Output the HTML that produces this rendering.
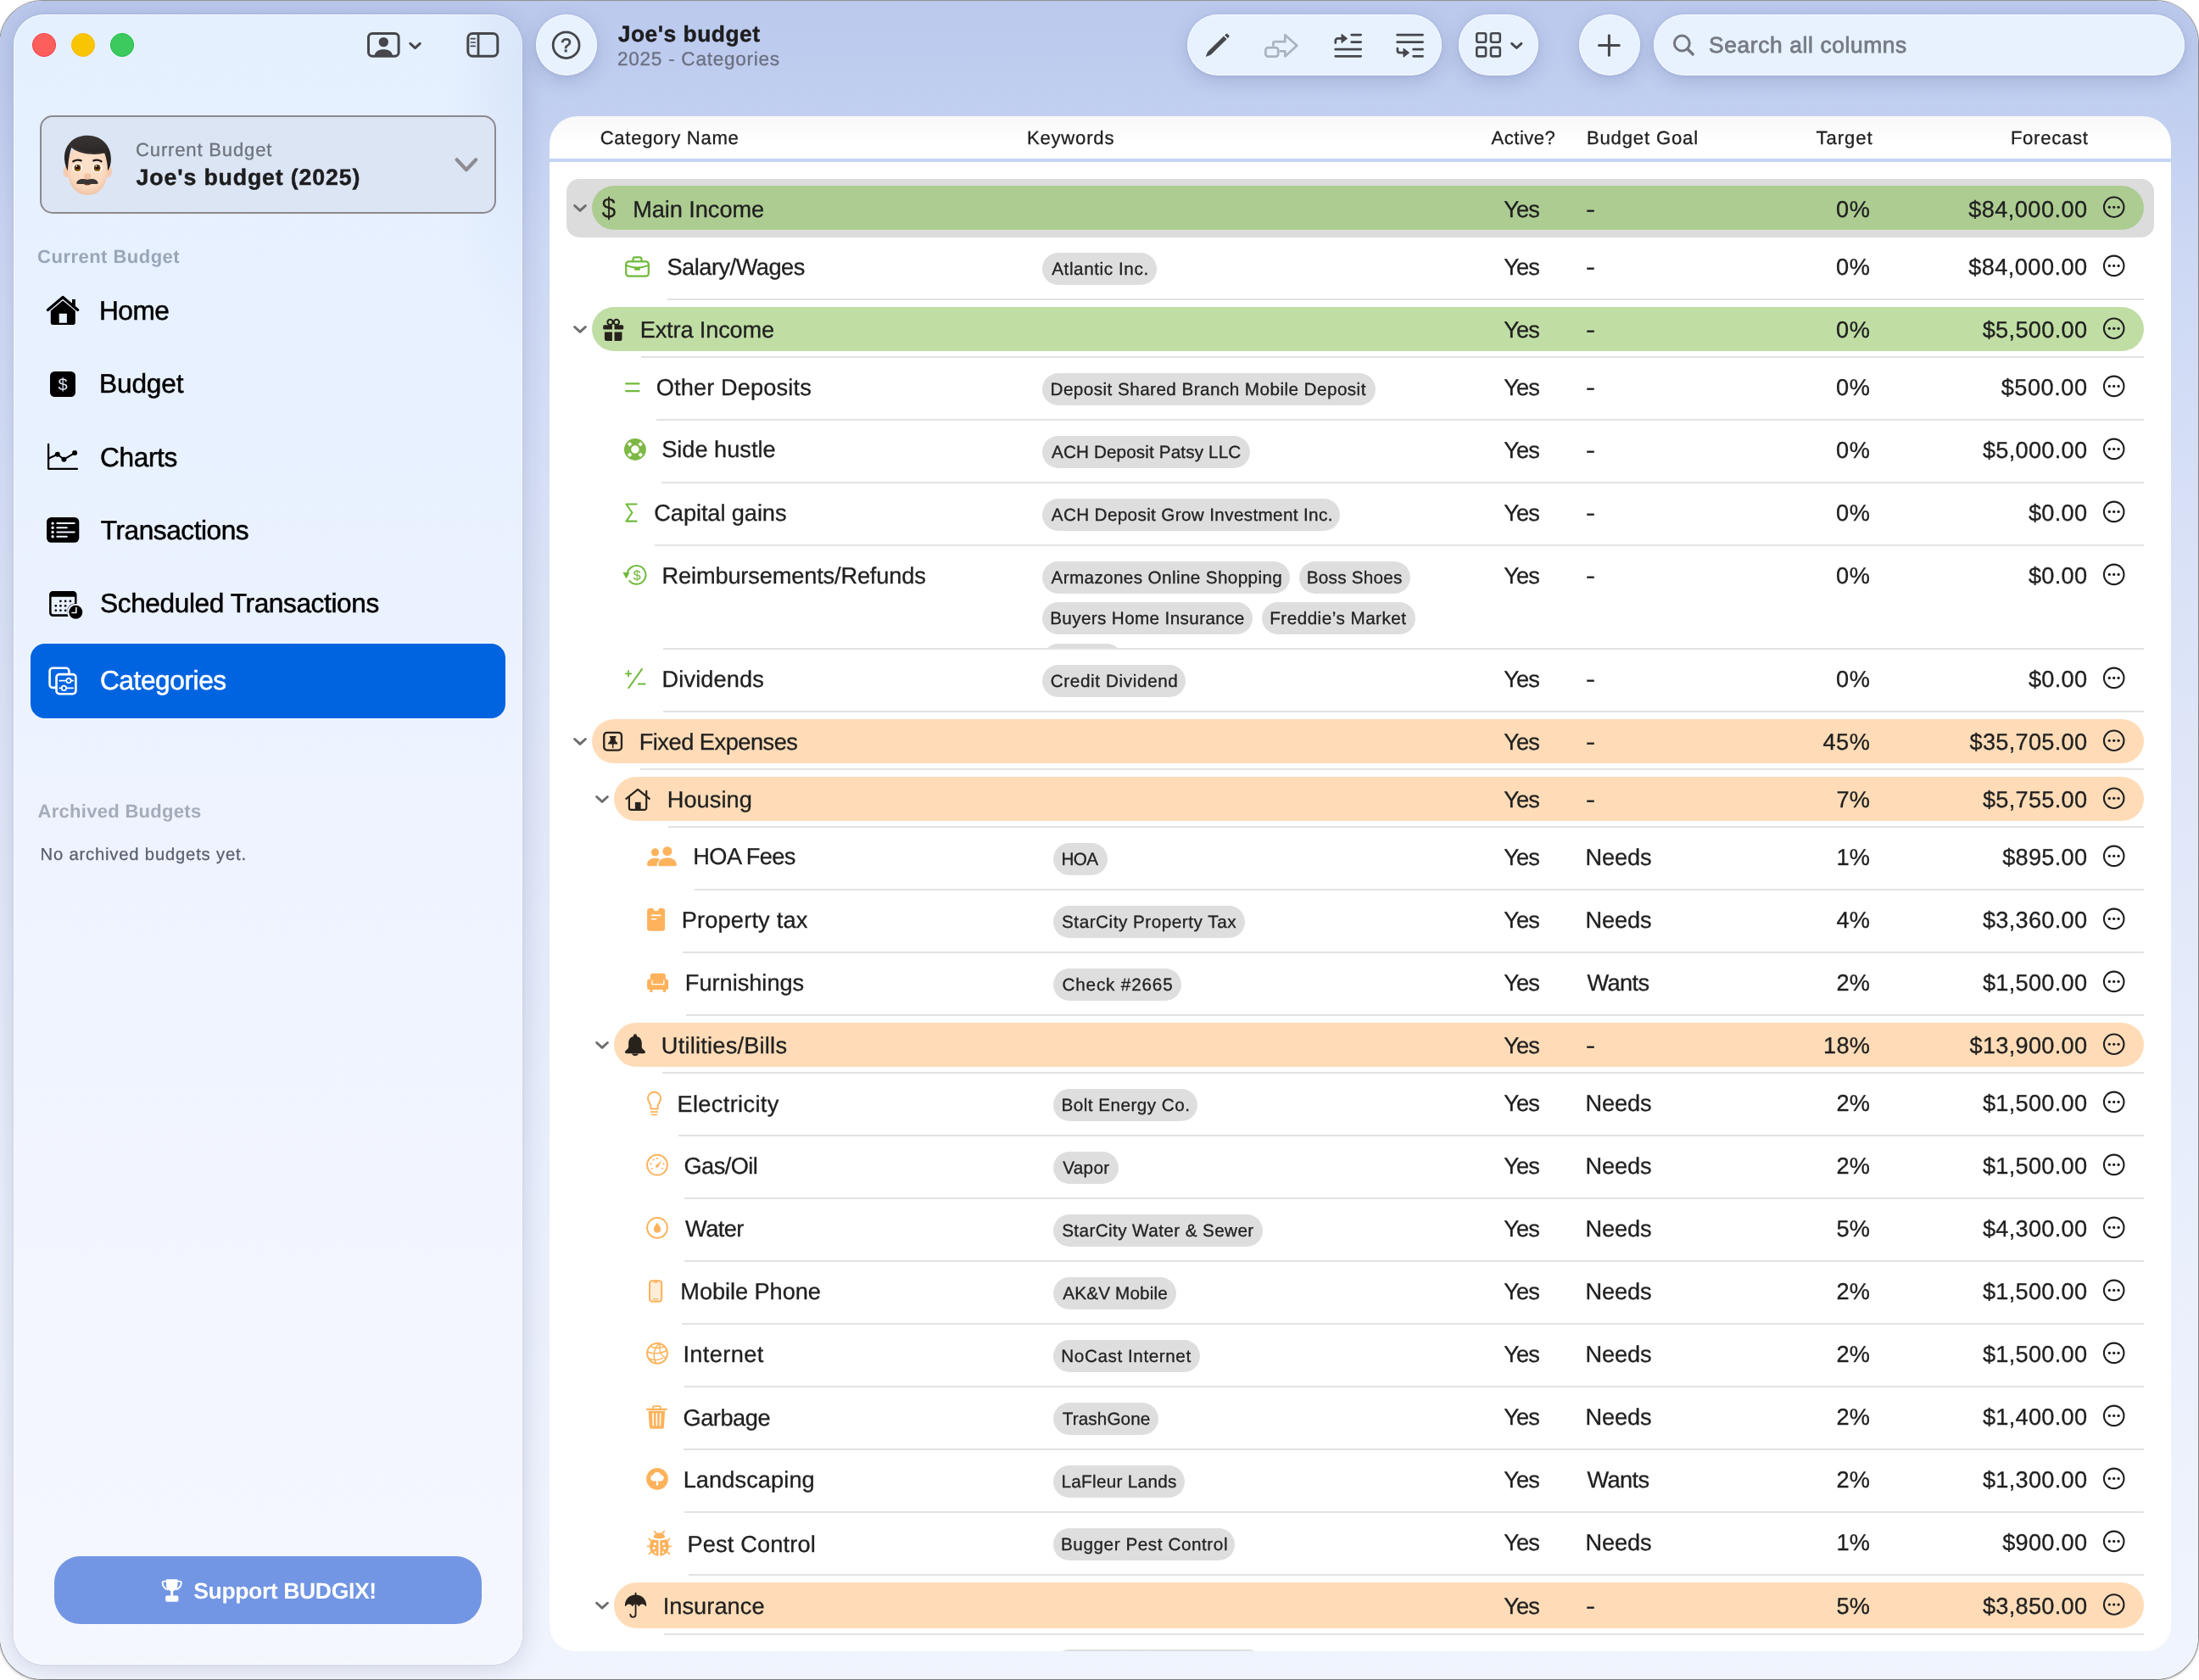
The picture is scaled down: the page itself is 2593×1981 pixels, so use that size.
<!DOCTYPE html>
<html lang="en"><head><meta charset="utf-8"><title>BUDGIX - Categories</title>
<style>
html,body{margin:0;padding:0;}
body{width:2593px;height:1981px;background:#fff;position:relative;overflow:hidden;font-family:"Liberation Sans", sans-serif;}
#app{position:absolute;left:0;top:0;width:2593px;height:1981px;overflow:hidden;will-change:transform;}
#app div{position:absolute;box-sizing:border-box;}
.t{position:absolute;white-space:pre;line-height:1em;text-rendering:geometricPrecision;}
svg text{text-rendering:geometricPrecision;}
svg.ov{position:absolute;left:0;top:0;pointer-events:none;}
</style></head>
<body><div id="app">
<div style="left:0;top:1px;width:2592px;height:1979px;border-radius:50px;background:linear-gradient(180deg,rgb(187,201,237) 0%,rgb(191,205,239) 5%,rgb(205,216,244) 15%,rgb(215,224,246) 30%,rgb(223,230,248) 45%,rgb(232,238,251) 70%,rgb(240,244,253) 100%);box-shadow:0 0 0 1px rgba(0,0,0,.36),0 1px 3px 1px rgba(0,0,0,.28);"></div>
<nav aria-label="Sidebar">
<div style="left:16px;top:17px;width:600px;height:1946px;border-radius:36px;background:linear-gradient(180deg,#e5f0ff 0%,#e8f1ff 25%,#eef3ff 50%,#f3f6ff 80%,#f5f7ff 100%);box-shadow:0 0 0 1px rgba(255,255,255,.55) inset,0 4px 28px rgba(30,40,90,.16),0 0 3px rgba(30,40,90,.10);"></div>
<div style="left:316px;top:17px;width:300px;height:520px;border-radius:0 36px 0 0;background:radial-gradient(ellipse 90px 330px at 100% 14%,rgba(110,135,200,.10),rgba(110,135,200,0) 100%);"></div>
<div style="left:47px;top:136px;width:538px;height:116px;border-radius:15px;border:2px solid #8c8a8f;background:#dbe5f4;"></div>
<span class="t" style="left:160.08px;top:166px;font-size:22.1px;color:#6f747d;letter-spacing:0.804px;-webkit-text-stroke:0.3px #6f747d;">Current Budget</span>
<span class="t" style="left:160.60px;top:196px;font-size:26.7px;color:#1d1d1f;letter-spacing:0.869px;font-weight:700;-webkit-text-stroke:0.45px #1d1d1f;">Joe's budget (2025)</span>
<span class="t" style="left:44.10px;top:292px;font-size:22px;color:#9aa5b8;letter-spacing:0.480px;font-weight:700;">Current Budget</span>
<span class="t" style="left:116.91px;top:351px;font-size:31.6px;color:#000;letter-spacing:-0.426px;-webkit-text-stroke:0.5px #000;">Home</span>
<span class="t" style="left:116.91px;top:437px;font-size:31.6px;color:#000;letter-spacing:-0.082px;-webkit-text-stroke:0.5px #000;">Budget</span>
<span class="t" style="left:117.90px;top:524px;font-size:31.6px;color:#000;letter-spacing:-0.321px;-webkit-text-stroke:0.5px #000;">Charts</span>
<span class="t" style="left:118.79px;top:610px;font-size:31.6px;color:#000;letter-spacing:-0.440px;-webkit-text-stroke:0.5px #000;">Transactions</span>
<span class="t" style="left:118.07px;top:696px;font-size:31.6px;color:#000;letter-spacing:-0.383px;-webkit-text-stroke:0.5px #000;">Scheduled Transactions</span>
<div style="left:36px;top:759px;width:560px;height:88px;border-radius:17px;background:#0064e1;"></div>
<span class="t" style="left:117.90px;top:787px;font-size:31.6px;color:#fff;letter-spacing:-0.393px;-webkit-text-stroke:0.5px #fff;">Categories</span>
<span class="t" style="left:44.45px;top:946px;font-size:22px;color:#a5acb9;letter-spacing:0.300px;font-weight:700;">Archived Budgets</span>
<span class="t" style="left:47.54px;top:998px;font-size:20.2px;color:#5a6170;letter-spacing:0.834px;-webkit-text-stroke:0.3px #5a6170;">No archived budgets yet.</span>
<div style="left:64px;top:1835px;width:504px;height:80px;border-radius:31px;background:#7296e3;"></div>
<span class="t" style="left:228.23px;top:1863px;font-size:26.6px;color:#fff;letter-spacing:-0.407px;font-weight:700;">Support BUDGIX!</span>
</nav>
<header aria-label="Toolbar">
<div style="left:632px;top:17px;width:72px;height:72px;border-radius:36px;background:#e8f2ff;box-shadow:0 0 0 1px rgba(255,255,255,.55) inset,0 6px 22px rgba(40,55,110,.17),0 1px 4px rgba(40,55,110,.08);"></div>
<div style="left:1400px;top:17px;width:300px;height:72px;border-radius:36px;background:#e8f2ff;box-shadow:0 0 0 1px rgba(255,255,255,.55) inset,0 6px 22px rgba(40,55,110,.17),0 1px 4px rgba(40,55,110,.08);"></div>
<div style="left:1720px;top:17px;width:94px;height:72px;border-radius:36px;background:#e8f2ff;box-shadow:0 0 0 1px rgba(255,255,255,.55) inset,0 6px 22px rgba(40,55,110,.17),0 1px 4px rgba(40,55,110,.08);"></div>
<div style="left:1862px;top:17px;width:72px;height:72px;border-radius:36px;background:#e8f2ff;box-shadow:0 0 0 1px rgba(255,255,255,.55) inset,0 6px 22px rgba(40,55,110,.17),0 1px 4px rgba(40,55,110,.08);"></div>
<div style="left:1950px;top:17px;width:626px;height:72px;border-radius:36px;background:#e8f2ff;box-shadow:0 0 0 1px rgba(255,255,255,.55) inset,0 6px 22px rgba(40,55,110,.17),0 1px 4px rgba(40,55,110,.08);"></div>
<span class="t" style="left:728.80px;top:27px;font-size:26.4px;color:#1d1d1f;letter-spacing:0.501px;font-weight:700;-webkit-text-stroke:0.45px #1d1d1f;">Joe's budget</span>
<span class="t" style="left:728.06px;top:59px;font-size:22.6px;color:#6c7082;letter-spacing:0.709px;-webkit-text-stroke:0.3px #6c7082;">2025 - Categories</span>
<span class="t" style="left:2015.11px;top:40px;font-size:26.3px;color:#767b84;letter-spacing:0.646px;-webkit-text-stroke:0.8px #767b84;">Search all columns</span>
</header>
<main aria-label="Categories">
<div style="left:648px;top:137px;width:1912px;height:1810px;border-radius:33px 33px 30px 30px;background:linear-gradient(180deg,#f8f8f8 0,#fff 30px,#fff 100%);"></div>
<div style="left:648px;top:187px;width:1912px;height:4px;background:#c5d3f4;"></div>
<span class="t" style="left:707.68px;top:152px;font-size:22.1px;color:#1f1f1f;letter-spacing:0.699px;-webkit-text-stroke:0.3px #1f1f1f;">Category Name</span>
<span class="t" style="left:1210.89px;top:152px;font-size:22.1px;color:#1f1f1f;letter-spacing:0.801px;-webkit-text-stroke:0.3px #1f1f1f;">Keywords</span>
<span class="t" style="left:1758.56px;top:152px;font-size:22.1px;color:#1f1f1f;letter-spacing:0.485px;-webkit-text-stroke:0.3px #1f1f1f;">Active?</span>
<span class="t" style="left:1870.89px;top:152px;font-size:22.1px;color:#1f1f1f;letter-spacing:0.846px;-webkit-text-stroke:0.3px #1f1f1f;">Budget Goal</span>
<span class="t" style="left:2141.50px;top:152px;font-size:22.1px;color:#1f1f1f;letter-spacing:0.951px;-webkit-text-stroke:0.3px #1f1f1f;">Target</span>
<span class="t" style="left:2370.89px;top:152px;font-size:22.1px;color:#1f1f1f;letter-spacing:0.718px;-webkit-text-stroke:0.3px #1f1f1f;">Forecast</span>
<div style="left:668px;top:211px;width:1872px;height:69px;border-radius:15px;background:#dcdcdc;"></div>
<div style="left:698px;top:219px;width:1830px;height:52px;border-radius:26.0px;background:#adcc92;"></div>
<span class="t" style="left:746.27px;top:233px;font-size:27.2px;color:#1f1f1f;letter-spacing:-0.080px;-webkit-text-stroke:0.3px #1f1f1f;">Main Income</span>
<span class="t" style="left:1773.20px;top:233px;font-size:27.2px;color:#1f1f1f;letter-spacing:-0.885px;-webkit-text-stroke:0.3px #1f1f1f;">Yes</span>
<span class="t" style="left:1870.29px;top:233px;font-size:27.2px;color:#1f1f1f;-webkit-text-stroke:0.3px #1f1f1f;transform:scaleX(1.22);transform-origin:0 50%;">-</span>
<span class="t" style="left:2164.94px;top:233px;font-size:27.2px;color:#1f1f1f;letter-spacing:0.738px;-webkit-text-stroke:0.3px #1f1f1f;">0%</span>
<span class="t" style="left:2321.21px;top:233px;font-size:27.2px;color:#1f1f1f;letter-spacing:0.420px;-webkit-text-stroke:0.3px #1f1f1f;">$84,000.00</span>
<span class="t" style="left:786.46px;top:301px;font-size:27.2px;color:#1f1f1f;letter-spacing:-0.491px;-webkit-text-stroke:0.3px #1f1f1f;">Salary/Wages</span>
<div style="left:1229px;top:298px;width:134.5px;height:38px;border-radius:19.0px;background:#dedede;"></div>
<span class="t" style="left:1240.21px;top:308px;font-size:20.7px;color:#222;letter-spacing:0.583px;-webkit-text-stroke:0.3px #222;">Atlantic Inc.</span>
<span class="t" style="left:1773.20px;top:301px;font-size:27.2px;color:#1f1f1f;letter-spacing:-0.885px;-webkit-text-stroke:0.3px #1f1f1f;">Yes</span>
<span class="t" style="left:1870.29px;top:301px;font-size:27.2px;color:#1f1f1f;-webkit-text-stroke:0.3px #1f1f1f;transform:scaleX(1.22);transform-origin:0 50%;">-</span>
<span class="t" style="left:2164.94px;top:301px;font-size:27.2px;color:#1f1f1f;letter-spacing:0.738px;-webkit-text-stroke:0.3px #1f1f1f;">0%</span>
<span class="t" style="left:2321.21px;top:301px;font-size:27.2px;color:#1f1f1f;letter-spacing:0.420px;-webkit-text-stroke:0.3px #1f1f1f;">$84,000.00</span>
<div style="left:786.7px;top:352px;width:1741.3px;height:2px;background:#e2e2e2;"></div>
<div style="left:698px;top:362px;width:1830px;height:52px;border-radius:26.0px;background:#c0dea4;"></div>
<span class="t" style="left:754.67px;top:375px;font-size:27.2px;color:#1f1f1f;letter-spacing:-0.148px;-webkit-text-stroke:0.3px #1f1f1f;">Extra Income</span>
<span class="t" style="left:1773.20px;top:375px;font-size:27.2px;color:#1f1f1f;letter-spacing:-0.885px;-webkit-text-stroke:0.3px #1f1f1f;">Yes</span>
<span class="t" style="left:1870.29px;top:375px;font-size:27.2px;color:#1f1f1f;-webkit-text-stroke:0.3px #1f1f1f;transform:scaleX(1.22);transform-origin:0 50%;">-</span>
<span class="t" style="left:2164.94px;top:375px;font-size:27.2px;color:#1f1f1f;letter-spacing:0.738px;-webkit-text-stroke:0.3px #1f1f1f;">0%</span>
<span class="t" style="left:2337.71px;top:375px;font-size:27.2px;color:#1f1f1f;letter-spacing:0.301px;-webkit-text-stroke:0.3px #1f1f1f;">$5,500.00</span>
<div style="left:755.9px;top:420px;width:1772.1px;height:2px;background:#e2e2e2;"></div>
<span class="t" style="left:773.71px;top:443px;font-size:27.2px;color:#1f1f1f;letter-spacing:0.134px;-webkit-text-stroke:0.3px #1f1f1f;">Other Deposits</span>
<div style="left:1229px;top:440px;width:392.5px;height:38px;border-radius:19.0px;background:#dedede;"></div>
<span class="t" style="left:1238.55px;top:450px;font-size:20.7px;color:#222;letter-spacing:0.439px;-webkit-text-stroke:0.3px #222;">Deposit Shared Branch Mobile Deposit</span>
<span class="t" style="left:1773.20px;top:443px;font-size:27.2px;color:#1f1f1f;letter-spacing:-0.885px;-webkit-text-stroke:0.3px #1f1f1f;">Yes</span>
<span class="t" style="left:1870.29px;top:443px;font-size:27.2px;color:#1f1f1f;-webkit-text-stroke:0.3px #1f1f1f;transform:scaleX(1.22);transform-origin:0 50%;">-</span>
<span class="t" style="left:2164.94px;top:443px;font-size:27.2px;color:#1f1f1f;letter-spacing:0.738px;-webkit-text-stroke:0.3px #1f1f1f;">0%</span>
<span class="t" style="left:2359.71px;top:443px;font-size:27.2px;color:#1f1f1f;letter-spacing:0.513px;-webkit-text-stroke:0.3px #1f1f1f;">$500.00</span>
<div style="left:774.0px;top:494px;width:1754.0px;height:2px;background:#e2e2e2;"></div>
<span class="t" style="left:780.16px;top:516px;font-size:27.2px;color:#1f1f1f;-webkit-text-stroke:0.3px #1f1f1f;">Side hustle</span>
<div style="left:1229px;top:514px;width:244.5px;height:38px;border-radius:19.0px;background:#dedede;"></div>
<span class="t" style="left:1240.01px;top:524px;font-size:20.7px;color:#222;letter-spacing:0.124px;-webkit-text-stroke:0.3px #222;">ACH Deposit Patsy LLC</span>
<span class="t" style="left:1773.20px;top:517px;font-size:27.2px;color:#1f1f1f;letter-spacing:-0.885px;-webkit-text-stroke:0.3px #1f1f1f;">Yes</span>
<span class="t" style="left:1870.29px;top:517px;font-size:27.2px;color:#1f1f1f;-webkit-text-stroke:0.3px #1f1f1f;transform:scaleX(1.22);transform-origin:0 50%;">-</span>
<span class="t" style="left:2164.94px;top:517px;font-size:27.2px;color:#1f1f1f;letter-spacing:0.738px;-webkit-text-stroke:0.3px #1f1f1f;">0%</span>
<span class="t" style="left:2337.95px;top:517px;font-size:27.2px;color:#1f1f1f;letter-spacing:0.270px;-webkit-text-stroke:0.3px #1f1f1f;">$5,000.00</span>
<div style="left:780.4px;top:568px;width:1747.6px;height:2px;background:#e2e2e2;"></div>
<span class="t" style="left:771.32px;top:591px;font-size:27.2px;color:#1f1f1f;letter-spacing:-0.084px;-webkit-text-stroke:0.3px #1f1f1f;">Capital gains</span>
<div style="left:1229px;top:588px;width:351.4px;height:38px;border-radius:19.0px;background:#dedede;"></div>
<span class="t" style="left:1239.81px;top:598px;font-size:20.7px;color:#222;letter-spacing:0.350px;-webkit-text-stroke:0.3px #222;">ACH Deposit Grow Investment Inc.</span>
<span class="t" style="left:1773.20px;top:591px;font-size:27.2px;color:#1f1f1f;letter-spacing:-0.885px;-webkit-text-stroke:0.3px #1f1f1f;">Yes</span>
<span class="t" style="left:1870.29px;top:591px;font-size:27.2px;color:#1f1f1f;-webkit-text-stroke:0.3px #1f1f1f;transform:scaleX(1.22);transform-origin:0 50%;">-</span>
<span class="t" style="left:2164.94px;top:591px;font-size:27.2px;color:#1f1f1f;letter-spacing:0.738px;-webkit-text-stroke:0.3px #1f1f1f;">0%</span>
<span class="t" style="left:2391.95px;top:591px;font-size:27.2px;color:#1f1f1f;letter-spacing:0.270px;-webkit-text-stroke:0.3px #1f1f1f;">$0.00</span>
<div style="left:771.7px;top:642px;width:1756.3px;height:2px;background:#e2e2e2;"></div>
<span class="t" style="left:780.57px;top:665px;font-size:27.2px;color:#1f1f1f;letter-spacing:-0.147px;-webkit-text-stroke:0.3px #1f1f1f;">Reimbursements/Refunds</span>
<div style="left:1229px;top:644px;width:520px;height:120px;overflow:hidden;background:none;">
<div style="left:0px;top:18.0px;width:292px;height:38px;border-radius:19px;background:#dedede;"></div>
<div style="left:302.5999999999999px;top:18.0px;width:131.8px;height:38px;border-radius:19px;background:#dedede;"></div>
<div style="left:0px;top:66.3px;width:248.3px;height:38px;border-radius:19px;background:#dedede;"></div>
<div style="left:258.9000000000001px;top:66.3px;width:181px;height:38px;border-radius:19px;background:#dedede;"></div>
<div style="left:0px;top:114.6px;width:95px;height:38px;border-radius:19px;background:#dedede;"></div>
</div>
<span class="t" style="left:1239.46px;top:672px;font-size:20.7px;color:#222;letter-spacing:0.376px;-webkit-text-stroke:0.3px #222;">Armazones Online Shopping</span>
<span class="t" style="left:1540.80px;top:672px;font-size:20.7px;color:#222;letter-spacing:0.228px;-webkit-text-stroke:0.3px #222;">Boss Shoes</span>
<span class="t" style="left:1238.15px;top:720px;font-size:20.7px;color:#222;letter-spacing:0.365px;-webkit-text-stroke:0.3px #222;">Buyers Home Insurance</span>
<span class="t" style="left:1497.20px;top:720px;font-size:20.7px;color:#222;letter-spacing:0.478px;-webkit-text-stroke:0.3px #222;">Freddie’s Market</span>
<span class="t" style="left:1773.20px;top:665px;font-size:27.2px;color:#1f1f1f;letter-spacing:-0.885px;-webkit-text-stroke:0.3px #1f1f1f;">Yes</span>
<span class="t" style="left:1870.29px;top:665px;font-size:27.2px;color:#1f1f1f;-webkit-text-stroke:0.3px #1f1f1f;transform:scaleX(1.22);transform-origin:0 50%;">-</span>
<span class="t" style="left:2164.94px;top:665px;font-size:27.2px;color:#1f1f1f;letter-spacing:0.738px;-webkit-text-stroke:0.3px #1f1f1f;">0%</span>
<span class="t" style="left:2391.95px;top:665px;font-size:27.2px;color:#1f1f1f;letter-spacing:0.270px;-webkit-text-stroke:0.3px #1f1f1f;">$0.00</span>
<div style="left:781.8px;top:764px;width:1746.2px;height:2px;background:#e2e2e2;"></div>
<span class="t" style="left:780.57px;top:787px;font-size:27.2px;color:#1f1f1f;letter-spacing:0.116px;-webkit-text-stroke:0.3px #1f1f1f;">Dividends</span>
<div style="left:1229px;top:784px;width:169.4px;height:38px;border-radius:19.0px;background:#dedede;"></div>
<span class="t" style="left:1238.80px;top:794px;font-size:20.7px;color:#222;letter-spacing:0.618px;-webkit-text-stroke:0.3px #222;">Credit Dividend</span>
<span class="t" style="left:1773.20px;top:787px;font-size:27.2px;color:#1f1f1f;letter-spacing:-0.885px;-webkit-text-stroke:0.3px #1f1f1f;">Yes</span>
<span class="t" style="left:1870.29px;top:787px;font-size:27.2px;color:#1f1f1f;-webkit-text-stroke:0.3px #1f1f1f;transform:scaleX(1.22);transform-origin:0 50%;">-</span>
<span class="t" style="left:2164.94px;top:787px;font-size:27.2px;color:#1f1f1f;letter-spacing:0.738px;-webkit-text-stroke:0.3px #1f1f1f;">0%</span>
<span class="t" style="left:2391.95px;top:787px;font-size:27.2px;color:#1f1f1f;letter-spacing:0.270px;-webkit-text-stroke:0.3px #1f1f1f;">$0.00</span>
<div style="left:781.8px;top:838px;width:1746.2px;height:2px;background:#e2e2e2;"></div>
<div style="left:698px;top:848px;width:1830px;height:52px;border-radius:26.0px;background:#ffdcb7;"></div>
<span class="t" style="left:753.67px;top:861px;font-size:27.2px;color:#1f1f1f;letter-spacing:-0.471px;-webkit-text-stroke:0.3px #1f1f1f;">Fixed Expenses</span>
<span class="t" style="left:1773.20px;top:861px;font-size:27.2px;color:#1f1f1f;letter-spacing:-0.885px;-webkit-text-stroke:0.3px #1f1f1f;">Yes</span>
<span class="t" style="left:1870.29px;top:861px;font-size:27.2px;color:#1f1f1f;-webkit-text-stroke:0.3px #1f1f1f;transform:scaleX(1.22);transform-origin:0 50%;">-</span>
<span class="t" style="left:2149.38px;top:861px;font-size:27.2px;color:#1f1f1f;letter-spacing:0.589px;-webkit-text-stroke:0.3px #1f1f1f;">45%</span>
<span class="t" style="left:2322.56px;top:861px;font-size:27.2px;color:#1f1f1f;letter-spacing:0.270px;-webkit-text-stroke:0.3px #1f1f1f;">$35,705.00</span>
<div style="left:754.9px;top:906px;width:1773.1px;height:2px;background:#e2e2e2;"></div>
<div style="left:724px;top:916px;width:1804px;height:52px;border-radius:26.0px;background:#ffdcb7;"></div>
<span class="t" style="left:786.77px;top:929px;font-size:27.2px;color:#1f1f1f;letter-spacing:0.039px;-webkit-text-stroke:0.3px #1f1f1f;">Housing</span>
<span class="t" style="left:1773.20px;top:929px;font-size:27.2px;color:#1f1f1f;letter-spacing:-0.885px;-webkit-text-stroke:0.3px #1f1f1f;">Yes</span>
<span class="t" style="left:1870.29px;top:929px;font-size:27.2px;color:#1f1f1f;-webkit-text-stroke:0.3px #1f1f1f;transform:scaleX(1.22);transform-origin:0 50%;">-</span>
<span class="t" style="left:2165.41px;top:929px;font-size:27.2px;color:#1f1f1f;letter-spacing:0.270px;-webkit-text-stroke:0.3px #1f1f1f;">7%</span>
<span class="t" style="left:2337.95px;top:929px;font-size:27.2px;color:#1f1f1f;letter-spacing:0.270px;-webkit-text-stroke:0.3px #1f1f1f;">$5,755.00</span>
<div style="left:788.0px;top:974px;width:1740.0px;height:2px;background:#e2e2e2;"></div>
<span class="t" style="left:817.37px;top:996px;font-size:27.2px;color:#1f1f1f;letter-spacing:-0.628px;-webkit-text-stroke:0.3px #1f1f1f;">HOA Fees</span>
<div style="left:1242.3px;top:994px;width:63.6px;height:38px;border-radius:19.0px;background:#dedede;"></div>
<span class="t" style="left:1251.40px;top:1004px;font-size:20.7px;color:#222;letter-spacing:-0.546px;-webkit-text-stroke:0.3px #222;">HOA</span>
<span class="t" style="left:1773.20px;top:997px;font-size:27.2px;color:#1f1f1f;letter-spacing:-0.885px;-webkit-text-stroke:0.3px #1f1f1f;">Yes</span>
<span class="t" style="left:1869.47px;top:997px;font-size:27.2px;color:#1f1f1f;letter-spacing:-0.094px;-webkit-text-stroke:0.3px #1f1f1f;">Needs</span>
<span class="t" style="left:2165.41px;top:997px;font-size:27.2px;color:#1f1f1f;letter-spacing:0.270px;-webkit-text-stroke:0.3px #1f1f1f;">1%</span>
<span class="t" style="left:2361.17px;top:997px;font-size:27.2px;color:#1f1f1f;letter-spacing:0.270px;-webkit-text-stroke:0.3px #1f1f1f;">$895.00</span>
<div style="left:818.6px;top:1048px;width:1709.4px;height:2px;background:#e2e2e2;"></div>
<span class="t" style="left:803.67px;top:1071px;font-size:27.2px;color:#1f1f1f;letter-spacing:0.187px;-webkit-text-stroke:0.3px #1f1f1f;">Property tax</span>
<div style="left:1242.3px;top:1068px;width:225.7px;height:38px;border-radius:19.0px;background:#dedede;"></div>
<span class="t" style="left:1252.06px;top:1078px;font-size:20.7px;color:#222;letter-spacing:0.520px;-webkit-text-stroke:0.3px #222;">StarCity Property Tax</span>
<span class="t" style="left:1773.20px;top:1071px;font-size:27.2px;color:#1f1f1f;letter-spacing:-0.885px;-webkit-text-stroke:0.3px #1f1f1f;">Yes</span>
<span class="t" style="left:1869.47px;top:1071px;font-size:27.2px;color:#1f1f1f;letter-spacing:-0.094px;-webkit-text-stroke:0.3px #1f1f1f;">Needs</span>
<span class="t" style="left:2165.41px;top:1071px;font-size:27.2px;color:#1f1f1f;letter-spacing:0.270px;-webkit-text-stroke:0.3px #1f1f1f;">4%</span>
<span class="t" style="left:2337.95px;top:1071px;font-size:27.2px;color:#1f1f1f;letter-spacing:0.270px;-webkit-text-stroke:0.3px #1f1f1f;">$3,360.00</span>
<div style="left:804.9px;top:1122px;width:1723.1px;height:2px;background:#e2e2e2;"></div>
<span class="t" style="left:807.87px;top:1145px;font-size:27.2px;color:#1f1f1f;letter-spacing:-0.022px;-webkit-text-stroke:0.3px #1f1f1f;">Furnishings</span>
<div style="left:1242.3px;top:1142px;width:150.7px;height:38px;border-radius:19.0px;background:#dedede;"></div>
<span class="t" style="left:1252.45px;top:1152px;font-size:20.7px;color:#222;letter-spacing:0.831px;-webkit-text-stroke:0.3px #222;">Check #2665</span>
<span class="t" style="left:1773.20px;top:1145px;font-size:27.2px;color:#1f1f1f;letter-spacing:-0.885px;-webkit-text-stroke:0.3px #1f1f1f;">Yes</span>
<span class="t" style="left:1871.58px;top:1145px;font-size:27.2px;color:#1f1f1f;letter-spacing:-0.659px;-webkit-text-stroke:0.3px #1f1f1f;">Wants</span>
<span class="t" style="left:2165.41px;top:1145px;font-size:27.2px;color:#1f1f1f;letter-spacing:0.270px;-webkit-text-stroke:0.3px #1f1f1f;">2%</span>
<span class="t" style="left:2337.95px;top:1145px;font-size:27.2px;color:#1f1f1f;letter-spacing:0.270px;-webkit-text-stroke:0.3px #1f1f1f;">$1,500.00</span>
<div style="left:809.1px;top:1196px;width:1718.9px;height:2px;background:#e2e2e2;"></div>
<div style="left:724px;top:1206px;width:1804px;height:52px;border-radius:26.0px;background:#ffdcb7;"></div>
<span class="t" style="left:779.80px;top:1219px;font-size:27.2px;color:#1f1f1f;letter-spacing:0.226px;-webkit-text-stroke:0.3px #1f1f1f;">Utilities/Bills</span>
<span class="t" style="left:1773.20px;top:1219px;font-size:27.2px;color:#1f1f1f;letter-spacing:-0.885px;-webkit-text-stroke:0.3px #1f1f1f;">Yes</span>
<span class="t" style="left:1870.29px;top:1219px;font-size:27.2px;color:#1f1f1f;-webkit-text-stroke:0.3px #1f1f1f;transform:scaleX(1.22);transform-origin:0 50%;">-</span>
<span class="t" style="left:2150.01px;top:1219px;font-size:27.2px;color:#1f1f1f;letter-spacing:0.270px;-webkit-text-stroke:0.3px #1f1f1f;">18%</span>
<span class="t" style="left:2322.56px;top:1219px;font-size:27.2px;color:#1f1f1f;letter-spacing:0.270px;-webkit-text-stroke:0.3px #1f1f1f;">$13,900.00</span>
<div style="left:780.9px;top:1264px;width:1747.1px;height:2px;background:#e2e2e2;"></div>
<span class="t" style="left:798.52px;top:1288px;font-size:27.2px;color:#1f1f1f;letter-spacing:0.342px;-webkit-text-stroke:0.3px #1f1f1f;">Electricity</span>
<div style="left:1242.3px;top:1284px;width:169.7px;height:38px;border-radius:19.0px;background:#dedede;"></div>
<span class="t" style="left:1251.55px;top:1294px;font-size:20.7px;color:#222;letter-spacing:0.465px;-webkit-text-stroke:0.3px #222;">Bolt Energy Co.</span>
<span class="t" style="left:1773.20px;top:1287px;font-size:27.2px;color:#1f1f1f;letter-spacing:-0.885px;-webkit-text-stroke:0.3px #1f1f1f;">Yes</span>
<span class="t" style="left:1869.47px;top:1287px;font-size:27.2px;color:#1f1f1f;letter-spacing:-0.094px;-webkit-text-stroke:0.3px #1f1f1f;">Needs</span>
<span class="t" style="left:2165.41px;top:1287px;font-size:27.2px;color:#1f1f1f;letter-spacing:0.270px;-webkit-text-stroke:0.3px #1f1f1f;">2%</span>
<span class="t" style="left:2337.95px;top:1287px;font-size:27.2px;color:#1f1f1f;letter-spacing:0.270px;-webkit-text-stroke:0.3px #1f1f1f;">$1,500.00</span>
<div style="left:799.8px;top:1338px;width:1728.2px;height:2px;background:#e2e2e2;"></div>
<span class="t" style="left:806.53px;top:1361px;font-size:27.2px;color:#1f1f1f;letter-spacing:-0.559px;-webkit-text-stroke:0.3px #1f1f1f;">Gas/Oil</span>
<div style="left:1242.3px;top:1358px;width:76.4px;height:38px;border-radius:19.0px;background:#dedede;"></div>
<span class="t" style="left:1253.16px;top:1368px;font-size:20.7px;color:#222;letter-spacing:0.317px;-webkit-text-stroke:0.3px #222;">Vapor</span>
<span class="t" style="left:1773.20px;top:1361px;font-size:27.2px;color:#1f1f1f;letter-spacing:-0.885px;-webkit-text-stroke:0.3px #1f1f1f;">Yes</span>
<span class="t" style="left:1869.47px;top:1361px;font-size:27.2px;color:#1f1f1f;letter-spacing:-0.094px;-webkit-text-stroke:0.3px #1f1f1f;">Needs</span>
<span class="t" style="left:2165.41px;top:1361px;font-size:27.2px;color:#1f1f1f;letter-spacing:0.270px;-webkit-text-stroke:0.3px #1f1f1f;">2%</span>
<span class="t" style="left:2337.95px;top:1361px;font-size:27.2px;color:#1f1f1f;letter-spacing:0.270px;-webkit-text-stroke:0.3px #1f1f1f;">$1,500.00</span>
<div style="left:806.9px;top:1412px;width:1721.1px;height:2px;background:#e2e2e2;"></div>
<span class="t" style="left:808.08px;top:1435px;font-size:27.2px;color:#1f1f1f;letter-spacing:-0.582px;-webkit-text-stroke:0.3px #1f1f1f;">Water</span>
<div style="left:1242.3px;top:1432px;width:246.4px;height:38px;border-radius:19.0px;background:#dedede;"></div>
<span class="t" style="left:1252.16px;top:1442px;font-size:20.7px;color:#222;letter-spacing:0.401px;-webkit-text-stroke:0.3px #222;">StarCity Water &amp; Sewer</span>
<span class="t" style="left:1773.20px;top:1435px;font-size:27.2px;color:#1f1f1f;letter-spacing:-0.885px;-webkit-text-stroke:0.3px #1f1f1f;">Yes</span>
<span class="t" style="left:1869.47px;top:1435px;font-size:27.2px;color:#1f1f1f;letter-spacing:-0.094px;-webkit-text-stroke:0.3px #1f1f1f;">Needs</span>
<span class="t" style="left:2165.41px;top:1435px;font-size:27.2px;color:#1f1f1f;letter-spacing:0.270px;-webkit-text-stroke:0.3px #1f1f1f;">5%</span>
<span class="t" style="left:2337.95px;top:1435px;font-size:27.2px;color:#1f1f1f;letter-spacing:0.270px;-webkit-text-stroke:0.3px #1f1f1f;">$4,300.00</span>
<div style="left:807.2px;top:1486px;width:1720.8px;height:2px;background:#e2e2e2;"></div>
<span class="t" style="left:802.37px;top:1509px;font-size:27.2px;color:#1f1f1f;letter-spacing:-0.065px;-webkit-text-stroke:0.3px #1f1f1f;">Mobile Phone</span>
<div style="left:1242.3px;top:1506px;width:144.6px;height:38px;border-radius:19.0px;background:#dedede;"></div>
<span class="t" style="left:1253.31px;top:1516px;font-size:20.7px;color:#222;letter-spacing:0.158px;-webkit-text-stroke:0.3px #222;">AK&amp;V Mobile</span>
<span class="t" style="left:1773.20px;top:1509px;font-size:27.2px;color:#1f1f1f;letter-spacing:-0.885px;-webkit-text-stroke:0.3px #1f1f1f;">Yes</span>
<span class="t" style="left:1869.47px;top:1509px;font-size:27.2px;color:#1f1f1f;letter-spacing:-0.094px;-webkit-text-stroke:0.3px #1f1f1f;">Needs</span>
<span class="t" style="left:2165.41px;top:1509px;font-size:27.2px;color:#1f1f1f;letter-spacing:0.270px;-webkit-text-stroke:0.3px #1f1f1f;">2%</span>
<span class="t" style="left:2337.95px;top:1509px;font-size:27.2px;color:#1f1f1f;letter-spacing:0.270px;-webkit-text-stroke:0.3px #1f1f1f;">$1,500.00</span>
<div style="left:803.6px;top:1560px;width:1724.4px;height:2px;background:#e2e2e2;"></div>
<span class="t" style="left:805.39px;top:1583px;font-size:27.2px;color:#1f1f1f;letter-spacing:0.373px;-webkit-text-stroke:0.3px #1f1f1f;">Internet</span>
<div style="left:1242.3px;top:1580px;width:172.4px;height:38px;border-radius:19.0px;background:#dedede;"></div>
<span class="t" style="left:1251.30px;top:1590px;font-size:20.7px;color:#222;letter-spacing:0.569px;-webkit-text-stroke:0.3px #222;">NoCast Internet</span>
<span class="t" style="left:1773.20px;top:1583px;font-size:27.2px;color:#1f1f1f;letter-spacing:-0.885px;-webkit-text-stroke:0.3px #1f1f1f;">Yes</span>
<span class="t" style="left:1869.47px;top:1583px;font-size:27.2px;color:#1f1f1f;letter-spacing:-0.094px;-webkit-text-stroke:0.3px #1f1f1f;">Needs</span>
<span class="t" style="left:2165.41px;top:1583px;font-size:27.2px;color:#1f1f1f;letter-spacing:0.270px;-webkit-text-stroke:0.3px #1f1f1f;">2%</span>
<span class="t" style="left:2337.95px;top:1583px;font-size:27.2px;color:#1f1f1f;letter-spacing:0.270px;-webkit-text-stroke:0.3px #1f1f1f;">$1,500.00</span>
<div style="left:806.9px;top:1634px;width:1721.1px;height:2px;background:#e2e2e2;"></div>
<span class="t" style="left:805.43px;top:1658px;font-size:27.2px;color:#1f1f1f;letter-spacing:-0.438px;-webkit-text-stroke:0.3px #1f1f1f;">Garbage</span>
<div style="left:1242.3px;top:1654px;width:124px;height:38px;border-radius:19.0px;background:#dedede;"></div>
<span class="t" style="left:1252.69px;top:1664px;font-size:20.7px;color:#222;letter-spacing:0.121px;-webkit-text-stroke:0.3px #222;">TrashGone</span>
<span class="t" style="left:1773.20px;top:1657px;font-size:27.2px;color:#1f1f1f;letter-spacing:-0.885px;-webkit-text-stroke:0.3px #1f1f1f;">Yes</span>
<span class="t" style="left:1869.47px;top:1657px;font-size:27.2px;color:#1f1f1f;letter-spacing:-0.094px;-webkit-text-stroke:0.3px #1f1f1f;">Needs</span>
<span class="t" style="left:2165.41px;top:1657px;font-size:27.2px;color:#1f1f1f;letter-spacing:0.270px;-webkit-text-stroke:0.3px #1f1f1f;">2%</span>
<span class="t" style="left:2337.95px;top:1657px;font-size:27.2px;color:#1f1f1f;letter-spacing:0.270px;-webkit-text-stroke:0.3px #1f1f1f;">$1,400.00</span>
<div style="left:805.8px;top:1708px;width:1722.2px;height:2px;background:#e2e2e2;"></div>
<span class="t" style="left:805.67px;top:1731px;font-size:27.2px;color:#1f1f1f;letter-spacing:0.089px;-webkit-text-stroke:0.3px #1f1f1f;">Landscaping</span>
<div style="left:1242.3px;top:1728px;width:155.2px;height:38px;border-radius:19.0px;background:#dedede;"></div>
<span class="t" style="left:1251.50px;top:1738px;font-size:20.7px;color:#222;letter-spacing:0.299px;-webkit-text-stroke:0.3px #222;">LaFleur Lands</span>
<span class="t" style="left:1773.20px;top:1731px;font-size:27.2px;color:#1f1f1f;letter-spacing:-0.885px;-webkit-text-stroke:0.3px #1f1f1f;">Yes</span>
<span class="t" style="left:1871.58px;top:1731px;font-size:27.2px;color:#1f1f1f;letter-spacing:-0.659px;-webkit-text-stroke:0.3px #1f1f1f;">Wants</span>
<span class="t" style="left:2165.41px;top:1731px;font-size:27.2px;color:#1f1f1f;letter-spacing:0.270px;-webkit-text-stroke:0.3px #1f1f1f;">2%</span>
<span class="t" style="left:2337.95px;top:1731px;font-size:27.2px;color:#1f1f1f;letter-spacing:0.270px;-webkit-text-stroke:0.3px #1f1f1f;">$1,300.00</span>
<div style="left:806.9px;top:1782px;width:1721.1px;height:2px;background:#e2e2e2;"></div>
<span class="t" style="left:810.57px;top:1807px;font-size:27.2px;color:#1f1f1f;letter-spacing:0.141px;-webkit-text-stroke:0.3px #1f1f1f;">Pest Control</span>
<div style="left:1242.3px;top:1802px;width:214.2px;height:38px;border-radius:19.0px;background:#dedede;"></div>
<span class="t" style="left:1251.00px;top:1812px;font-size:20.7px;color:#222;letter-spacing:0.566px;-webkit-text-stroke:0.3px #222;">Bugger Pest Control</span>
<span class="t" style="left:1773.20px;top:1805px;font-size:27.2px;color:#1f1f1f;letter-spacing:-0.885px;-webkit-text-stroke:0.3px #1f1f1f;">Yes</span>
<span class="t" style="left:1869.47px;top:1805px;font-size:27.2px;color:#1f1f1f;letter-spacing:-0.094px;-webkit-text-stroke:0.3px #1f1f1f;">Needs</span>
<span class="t" style="left:2165.41px;top:1805px;font-size:27.2px;color:#1f1f1f;letter-spacing:0.270px;-webkit-text-stroke:0.3px #1f1f1f;">1%</span>
<span class="t" style="left:2361.17px;top:1805px;font-size:27.2px;color:#1f1f1f;letter-spacing:0.270px;-webkit-text-stroke:0.3px #1f1f1f;">$900.00</span>
<div style="left:811.8px;top:1856px;width:1716.2px;height:2px;background:#e2e2e2;"></div>
<div style="left:724px;top:1866px;width:1804px;height:53.5px;border-radius:26.75px;background:#ffdcb7;"></div>
<span class="t" style="left:781.69px;top:1880px;font-size:27.2px;color:#1f1f1f;letter-spacing:0.053px;-webkit-text-stroke:0.3px #1f1f1f;">Insurance</span>
<span class="t" style="left:1773.20px;top:1880px;font-size:27.2px;color:#1f1f1f;letter-spacing:-0.885px;-webkit-text-stroke:0.3px #1f1f1f;">Yes</span>
<span class="t" style="left:1870.29px;top:1880px;font-size:27.2px;color:#1f1f1f;-webkit-text-stroke:0.3px #1f1f1f;transform:scaleX(1.22);transform-origin:0 50%;">-</span>
<span class="t" style="left:2165.41px;top:1880px;font-size:27.2px;color:#1f1f1f;letter-spacing:0.270px;-webkit-text-stroke:0.3px #1f1f1f;">5%</span>
<span class="t" style="left:2337.95px;top:1880px;font-size:27.2px;color:#1f1f1f;letter-spacing:0.270px;-webkit-text-stroke:0.3px #1f1f1f;">$3,850.00</span>
<div style="left:783.2px;top:1926px;width:1744.8px;height:2px;background:#e2e2e2;"></div>
<div style="left:1242.3px;top:1945px;width:248px;height:2px;overflow:hidden;"><div style="left:0;top:0;width:248px;height:38px;border-radius:19px;background:#dedede;"></div></div>
</main>
<svg class="ov" width="2593" height="1981" viewBox="0 0 2593 1981" font-family='"Liberation Sans", sans-serif'>
<circle cx="52" cy="53" r="13.6" fill="#ff5f5c" stroke="#f2343b" stroke-width="0.9"/>
<circle cx="98" cy="53" r="13.6" fill="#f9c402" stroke="#f4bb16" stroke-width="0.9"/>
<circle cx="144" cy="53" r="13.6" fill="#3cc95d" stroke="#17bb3f" stroke-width="0.9"/>
<rect x="434.5" y="39.5" width="35.6" height="26.8" rx="4.5" fill="none" stroke="#45474c" stroke-width="3"/>
<circle cx="452.3" cy="49.6" r="5.7" fill="#45474c"/>
<path d="M441.6,65.5 C442.5,60.5 446.5,58.2 452.3,58.2 C458.1,58.2 462.1,60.5 463,65.5 Z" fill="#45474c"/>
<path d="M483.8,51.3 L489.5,56.6 L495.2,51.3" fill="none" stroke="#45474c" stroke-width="3" stroke-linecap="round" stroke-linejoin="round"/>
<rect x="551.8" y="39.5" width="35" height="26.8" rx="5.5" fill="none" stroke="#45474c" stroke-width="3"/>
<path d="M564,39.5 V66.3" stroke="#45474c" stroke-width="2.8"/>
<path d="M555.3,45.6 H560.1" stroke="#45474c" stroke-width="1.7" stroke-linecap="round"/>
<path d="M555.3,50 H560.1" stroke="#45474c" stroke-width="1.7" stroke-linecap="round"/>
<path d="M555.3,54.4 H560.1" stroke="#45474c" stroke-width="1.7" stroke-linecap="round"/>
<path d="M538.6,188.2 L549.9,200.3 L561.2,188.2" fill="none" stroke="#8e8c92" stroke-width="4.2" stroke-linecap="round" stroke-linejoin="round"/>
<g>
<defs><radialGradient id="skin" cx="50%" cy="42%" r="62%"><stop offset="0" stop-color="#fde3cc"/><stop offset="0.7" stop-color="#fad9bf"/><stop offset="1" stop-color="#efc0a0"/></radialGradient>
<linearGradient id="hair" x1="0" y1="0" x2="0" y2="1"><stop offset="0" stop-color="#3a3434"/><stop offset="1" stop-color="#1c1919"/></linearGradient></defs>
<ellipse cx="78.6" cy="202.2" rx="3.9" ry="7" fill="#f4cbb0"/><ellipse cx="128" cy="202.2" rx="3.9" ry="7" fill="#f4cbb0"/>
<path d="M79.6,198 C79.6,182 88,170 103.3,170 C118.6,170 127.2,182 127.2,198 C127.2,217.5 118,229.9 103.3,229.9 C88.6,229.9 79.6,217.5 79.6,198 Z" fill="url(#skin)"/>
<path d="M79.9,201.6 C74.2,190 74.4,176.5 82.3,168.4 C87.4,162.4 95,159.8 103.4,159.8 C119,159.8 131.2,171 130.9,188 C130.8,193 129.6,197.6 127,201.6 C127,194 125.6,186.6 123.2,180.6 C112,183.6 93,181.8 84.3,174 C82,181 80.3,191 79.9,201.6 Z" fill="url(#hair)"/>
<path d="M82.6,170.6 C90,178.6 108,182.6 123.4,180.2" fill="none" stroke="#4a4444" stroke-width="0.9" opacity=".7"/>
<ellipse cx="91.2" cy="198" rx="5.9" ry="4.9" fill="#fff"/><ellipse cx="114.8" cy="198" rx="5.9" ry="4.9" fill="#fff"/>
<circle cx="91.4" cy="197.9" r="3.9" fill="#6b3a0b"/><circle cx="114.6" cy="197.9" r="3.9" fill="#6b3a0b"/>
<path d="M88.2,199.9 a3.9,3.9 0 0 0 6.6,0 Z" fill="#9a6a08"/><path d="M111.4,199.9 a3.9,3.9 0 0 0 6.6,0 Z" fill="#9a6a08"/>
<circle cx="91.4" cy="197.6" r="2" fill="#2a1204"/><circle cx="114.6" cy="197.6" r="2" fill="#2a1204"/>
<circle cx="90.3" cy="195.9" r="0.8" fill="#fff"/><circle cx="113.5" cy="195.9" r="0.8" fill="#fff"/>
<path d="M86.4,190.3 Q90.8,187.6 95.6,189.3" fill="none" stroke="#1f1b1b" stroke-width="2.4" stroke-linecap="round"/>
<path d="M110.4,189.3 Q115.2,187.6 119.4,190.3" fill="none" stroke="#1f1b1b" stroke-width="2.4" stroke-linecap="round"/>
<ellipse cx="103.1" cy="207.8" rx="4.3" ry="3.6" fill="#f1c3a3"/>
<path d="M96.6,215.2 Q103,222 109.4,215.2 Z" fill="#6b3a20"/>
<path d="M90,216.2 C91.4,211 96.8,210 103,211.8 C109.2,210 114.6,211 115.8,216.2 C112.6,218 108,216.4 103,216.9 C98,216.4 93.2,218 90,216.2 Z" fill="#3a3434"/>
</g>
<path d="M56.4,365.4 L74.1,350.4 L91.7,365.4" fill="none" stroke="#000" stroke-width="3.3" stroke-linecap="round" stroke-linejoin="round"/>
<path fill-rule="evenodd" d="M59.8,366.6 L74.1,354.6 L88.8,366.6 V380.2 a2.7,2.7 0 0 1 -2.7,2.7 H62.5 a2.7,2.7 0 0 1 -2.7,-2.7 Z M69.7,369.8 V380.8 H78.9 V369.8 Z" fill="#000"/>
<rect x="85" y="352.9" width="3.8" height="9.5" fill="#000"/>
<rect x="59" y="438" width="30" height="30" rx="5.5" fill="#000"/>
<text x="74" y="460.2" font-size="20" text-anchor="middle" fill="#dfe7f5">$</text>
<path d="M57.1,524 V552.8 H91" fill="none" stroke="#000" stroke-width="2.3" stroke-linecap="round" stroke-linejoin="round"/>
<path d="M57.5,540.5 L67.8,535.7 L75.4,541.7 L88.1,534.1" fill="none" stroke="#000" stroke-width="2.1" stroke-linejoin="round"/>
<circle cx="67.8" cy="535.7" r="3" fill="#000"/>
<circle cx="75.4" cy="541.7" r="3" fill="#000"/>
<circle cx="88.1" cy="534.1" r="3" fill="#000"/>
<rect x="55" y="610" width="38.3" height="29.8" rx="5.5" fill="#000"/>
<circle cx="62.1" cy="617.1" r="1.7" fill="#eef3ff"/>
<path d="M67.3,617.1 H87.7" stroke="#eef3ff" stroke-width="2" stroke-linecap="round"/>
<circle cx="62.1" cy="622.3" r="1.7" fill="#eef3ff"/>
<path d="M67.3,622.3 H78.8" stroke="#eef3ff" stroke-width="2" stroke-linecap="round"/>
<circle cx="62.1" cy="627.5" r="1.7" fill="#eef3ff"/>
<path d="M67.3,627.5 H87.7" stroke="#eef3ff" stroke-width="2" stroke-linecap="round"/>
<circle cx="62.1" cy="632.8" r="1.7" fill="#eef3ff"/>
<path d="M67.3,632.8 H78.8" stroke="#eef3ff" stroke-width="2" stroke-linecap="round"/>
<path fill-rule="evenodd" d="M62.3,697.1 H86.3 a4.2,4.2 0 0 1 4.2,4.2 V712 a10,10 0 0 0 -10,14.9 H62.3 a4.2,4.2 0 0 1 -4.2,-4.2 V701.3 a4.2,4.2 0 0 1 4.2,-4.2 Z M60.6,703.8 V722.2 a2,2 0 0 0 2,2 H79.3 a10,10 0 0 1 8.7,-12.6 V703.8 Z" fill="#000"/>
<circle cx="71.4" cy="708.9" r="1.35" fill="#000"/>
<circle cx="77.1" cy="708.9" r="1.35" fill="#000"/>
<circle cx="82.9" cy="708.9" r="1.35" fill="#000"/>
<circle cx="65.8" cy="714.3" r="1.35" fill="#000"/>
<circle cx="71.4" cy="714.3" r="1.35" fill="#000"/>
<circle cx="77.1" cy="714.3" r="1.35" fill="#000"/>
<circle cx="65.8" cy="719.8" r="1.35" fill="#000"/>
<circle cx="71.4" cy="719.8" r="1.35" fill="#000"/>
<circle cx="77.1" cy="719.8" r="1.35" fill="#000"/>
<circle cx="89.3" cy="721.8" r="8" fill="#000"/>
<path d="M89.8,716.6 V722.5 H84.9" fill="none" stroke="#eef3ff" stroke-width="1.6" stroke-linecap="round" stroke-linejoin="round"/>
<path d="M65.2,810.9 H62 a3.4,3.4 0 0 1 -3.4,-3.4 V791.2 a3.4,3.4 0 0 1 3.4,-3.4 H78 a3.4,3.4 0 0 1 3.4,3.4 V793.8" fill="none" stroke="#fff" stroke-width="2.6" stroke-linecap="round"/>
<rect x="66.5" y="795.1" width="22.9" height="23.1" rx="3.6" fill="none" stroke="#fff" stroke-width="2.6"/>
<path d="M70.2,802.6 H78.2 M83.8,802.6 H86.2 M70.2,811.4 H72.6 M78.2,811.4 H86.2" stroke="#fff" stroke-width="1.7" stroke-linecap="round"/>
<circle cx="81" cy="802.6" r="2.7" fill="none" stroke="#fff" stroke-width="1.7"/><circle cx="75.4" cy="811.4" r="2.7" fill="none" stroke="#fff" stroke-width="1.7"/>
<path d="M196,1862.2 H209.4 V1869.5 a6.7,6.7 0 0 1 -13.4,0 Z" fill="#fff"/>
<path d="M196.4,1864.6 H193.2 a1.6,1.6 0 0 0 -1.6,1.8 C192,1871 194.5,1873.6 198.2,1874.4" fill="none" stroke="#fff" stroke-width="1.9"/>
<path d="M209,1864.6 H212.2 a1.6,1.6 0 0 1 1.6,1.8 C213.4,1871 210.9,1873.6 207.2,1874.4" fill="none" stroke="#fff" stroke-width="1.9"/>
<rect x="201.2" y="1875" width="3" height="7.5" fill="#fff"/><rect x="195.2" y="1881.6" width="15.2" height="7.1" rx="1.6" fill="#fff"/>
<circle cx="667.6" cy="53.2" r="15.4" fill="none" stroke="#45474c" stroke-width="2.8"/>
<text x="667.6" y="61" font-size="22.5" text-anchor="middle" fill="#45474c" stroke="#45474c" stroke-width="0.8">?</text>
<path d="M1422.3,66.4 L1424.5,61 L1443.0,42.9 L1446.2,46.2 L1427.7,64.3 Z" fill="#45474c" stroke="#45474c" stroke-width="0.8" stroke-linejoin="round"/>
<path d="M1444.5,41.5 L1445.4,40.6 a1.7,1.7 0 0 1 2.4,0 L1448.7,41.5 a1.7,1.7 0 0 1 0,2.4 L1447.7,44.8 Z" fill="#45474c" stroke="#45474c" stroke-width="0.6" stroke-linejoin="round"/>
<rect x="1492.4" y="56.1" width="14.8" height="10.6" rx="3" fill="none" stroke="#aab2bf" stroke-width="2.7"/>
<path d="M1501.4,53.6 V50.8 a1.6,1.6 0 0 1 1.6,-1.6 H1515.3 V41.2 L1529.3,53.8 L1515.3,66.4 V60.4 H1509.8" fill="none" stroke="#aab2bf" stroke-width="2.7" stroke-linejoin="round" stroke-linecap="round"/>
<path d="M1593.7,41.1 H1604.7 M1593.7,49.6 H1604.7 M1574.7,58.2 H1604.7 M1574.7,66.3 H1604.7" stroke="#45474c" stroke-width="2.7" stroke-linecap="round"/>
<path d="M1574.8,50.6 V48 a2.6,2.6 0 0 1 2.6,-2.6 H1583" fill="none" stroke="#45474c" stroke-width="2.7" stroke-linecap="round"/>
<path d="M1582,40.3 L1588.6,45.4 L1582,50.5 Z" fill="#45474c" stroke="#45474c" stroke-width="1" stroke-linejoin="round"/>
<path d="M1647.6,41.1 H1677.6 M1647.6,49.6 H1677.6 M1666.6,58.2 H1677.6 M1666.6,66.3 H1677.6" stroke="#45474c" stroke-width="2.7" stroke-linecap="round"/>
<path d="M1647.9,57 V59.6 a2.6,2.6 0 0 0 2.6,2.6 H1656" fill="none" stroke="#45474c" stroke-width="2.7" stroke-linecap="round"/>
<path d="M1655,57.1 L1661.6,62.2 L1655,67.3 Z" fill="#45474c" stroke="#45474c" stroke-width="1" stroke-linejoin="round"/>
<rect x="1741.3" y="39.3" width="10.8" height="10.5" rx="2" fill="none" stroke="#45474c" stroke-width="2.6"/>
<rect x="1741.3" y="55.9" width="10.8" height="10.5" rx="2" fill="none" stroke="#45474c" stroke-width="2.6"/>
<rect x="1758" y="39.3" width="10.8" height="10.5" rx="2" fill="none" stroke="#45474c" stroke-width="2.6"/>
<rect x="1758" y="55.9" width="10.8" height="10.5" rx="2" fill="none" stroke="#45474c" stroke-width="2.6"/>
<path d="M1782.7,51.3 L1788.3,56.5 L1793.9,51.3" fill="none" stroke="#45474c" stroke-width="3" stroke-linecap="round" stroke-linejoin="round"/>
<path d="M1885.5,53.5 H1909.3 M1897.4,41.8 V65.2" stroke="#45474c" stroke-width="3" stroke-linecap="round"/>
<circle cx="1983.3" cy="51" r="8.9" fill="none" stroke="#73777f" stroke-width="3"/><path d="M1989.9,57.7 L1996.2,64" stroke="#73777f" stroke-width="3.4" stroke-linecap="round"/>
<path d="M677.6,242.5 L684.0,248.4 L690.4,242.5" fill="none" stroke="#6e6e6e" stroke-width="3" stroke-linecap="round" stroke-linejoin="round"/>
<text transform="translate(709.4,256.90000000000003) scale(0.97,1.1)" font-size="31" fill="#27221c">$</text>
<g transform="translate(2492.7,244.3)"><circle r="11.75" fill="none" stroke="#1f1f1f" stroke-width="2.1"/><circle cx="-5.4" r="1.65" fill="#1f1f1f"/><circle r="1.65" fill="#1f1f1f"/><circle cx="5.4" r="1.65" fill="#1f1f1f"/></g>
<g transform="translate(737.1,302.3)"><rect x="1.1" y="6.1" width="26.6" height="17.3" rx="3.2" fill="none" stroke="#6fba3a" stroke-width="2.2"/><path d="M9.4,6 V3.4 a2.3,2.3 0 0 1 2.3,-2.3 H17.1 a2.3,2.3 0 0 1 2.3,2.3 V6" fill="none" stroke="#6fba3a" stroke-width="2.2"/><path d="M1.3,10.6 Q14.4,16.2 27.5,10.6" fill="none" stroke="#6fba3a" stroke-width="2"/><rect x="11" y="12.4" width="6.8" height="4" rx="1.2" fill="#6fba3a"/></g>
<g transform="translate(2492.7,313.4)"><circle r="11.75" fill="none" stroke="#1f1f1f" stroke-width="2.1"/><circle cx="-5.4" r="1.65" fill="#1f1f1f"/><circle r="1.65" fill="#1f1f1f"/><circle cx="5.4" r="1.65" fill="#1f1f1f"/></g>
<path d="M677.6,385.5 L684.0,391.4 L690.4,385.5" fill="none" stroke="#6e6e6e" stroke-width="3" stroke-linecap="round" stroke-linejoin="round"/>
<g transform="translate(711.2,375.5)"><circle cx="8.3" cy="4.4" r="3.1" fill="none" stroke="#27221c" stroke-width="2.1"/><circle cx="15.7" cy="4.4" r="3.1" fill="none" stroke="#27221c" stroke-width="2.1"/><path d="M1.6,7.7 H10.7 V13.1 H1.6 A1.6,1.6 0 0 1 0,11.5 V9.3 A1.6,1.6 0 0 1 1.6,7.7 Z M13.3,7.7 H22.4 A1.6,1.6 0 0 1 24,9.3 V11.5 A1.6,1.6 0 0 1 22.4,13.1 H13.3 Z" fill="#27221c"/><path d="M1.7,15.9 H10.7 V26.4 H4.2 A2.5,2.5 0 0 1 1.7,23.9 Z M13.3,15.9 H22.3 V23.9 A2.5,2.5 0 0 1 19.8,26.4 H13.3 Z" fill="#27221c"/></g>
<g transform="translate(2492.7,387.3)"><circle r="11.75" fill="none" stroke="#1f1f1f" stroke-width="2.1"/><circle cx="-5.4" r="1.65" fill="#1f1f1f"/><circle r="1.65" fill="#1f1f1f"/><circle cx="5.4" r="1.65" fill="#1f1f1f"/></g>
<g transform="translate(737,451.2)"><path d="M1.1,1.1 H16.5 M1.1,10 H16.5" stroke="#6fba3a" stroke-width="2.2" stroke-linecap="round"/></g>
<g transform="translate(2492.7,455.4)"><circle r="11.75" fill="none" stroke="#1f1f1f" stroke-width="2.1"/><circle cx="-5.4" r="1.65" fill="#1f1f1f"/><circle r="1.65" fill="#1f1f1f"/><circle cx="5.4" r="1.65" fill="#1f1f1f"/></g>
<g transform="translate(748.9,530)"><circle r="12.9" fill="#7cb843"/><circle r="4.7" fill="#fff"/><rect x="-8.2" y="-8.2" width="3.8" height="3.8" transform="rotate(45 -6.3 -6.3)" fill="#fff"/><rect x="4.4" y="-8.2" width="3.8" height="3.8" transform="rotate(45 6.3 -6.3)" fill="#fff"/><rect x="-8.2" y="4.4" width="3.8" height="3.8" transform="rotate(45 -6.3 6.3)" fill="#fff"/><rect x="4.4" y="4.4" width="3.8" height="3.8" transform="rotate(45 6.3 6.3)" fill="#fff"/></g>
<g transform="translate(2492.7,529.4)"><circle r="11.75" fill="none" stroke="#1f1f1f" stroke-width="2.1"/><circle cx="-5.4" r="1.65" fill="#1f1f1f"/><circle r="1.65" fill="#1f1f1f"/><circle cx="5.4" r="1.65" fill="#1f1f1f"/></g>
<g transform="translate(736.8,593.4)"><path d="M13.8,1.1 H1.6 L8.6,11.1 L1.6,21.2 H13.8" fill="none" stroke="#6fba3a" stroke-width="2.1" stroke-linecap="round" stroke-linejoin="round"/></g>
<g transform="translate(2492.7,603.4)"><circle r="11.75" fill="none" stroke="#1f1f1f" stroke-width="2.1"/><circle cx="-5.4" r="1.65" fill="#1f1f1f"/><circle r="1.65" fill="#1f1f1f"/><circle cx="5.4" r="1.65" fill="#1f1f1f"/></g>
<g transform="translate(750.5,677.9)"><path d="M-10.89,0.38 A10.9,10.9 0 1 1 -8.35,7.01" fill="none" stroke="#6fba3a" stroke-width="2" stroke-linecap="round"/><path d="M-16.1,-2.8 H-8.1 L-12.1,4.6 Z" fill="#6fba3a"/><text x="0.5" y="5.9" font-size="16.5" text-anchor="middle" fill="#6fba3a">$</text></g>
<g transform="translate(2492.7,677.4)"><circle r="11.75" fill="none" stroke="#1f1f1f" stroke-width="2.1"/><circle cx="-5.4" r="1.65" fill="#1f1f1f"/><circle r="1.65" fill="#1f1f1f"/><circle cx="5.4" r="1.65" fill="#1f1f1f"/></g>
<g transform="translate(737.4,787.9)"><path d="M3.9,23.2 L19.5,1.2" stroke="#6fba3a" stroke-width="2" stroke-linecap="round"/><path d="M0.3,6.4 H6.9 M3.6,3.1 V9.7 M15.4,18.6 H23.3" stroke="#6fba3a" stroke-width="1.8" stroke-linecap="round"/></g>
<g transform="translate(2492.7,799.4)"><circle r="11.75" fill="none" stroke="#1f1f1f" stroke-width="2.1"/><circle cx="-5.4" r="1.65" fill="#1f1f1f"/><circle r="1.65" fill="#1f1f1f"/><circle cx="5.4" r="1.65" fill="#1f1f1f"/></g>
<path d="M677.6,871.5 L684.0,877.4 L690.4,871.5" fill="none" stroke="#6e6e6e" stroke-width="3" stroke-linecap="round" stroke-linejoin="round"/>
<g transform="translate(711.1,862.7)"><rect x="1.15" y="1.15" width="20.7" height="20.7" rx="3.6" fill="none" stroke="#27221c" stroke-width="2.3"/><rect x="7.6" y="5.2" width="7.9" height="2.2" rx="1" fill="#27221c"/><path d="M8.9,7 H14.2 L14.8,11.3 C16.4,12.1 17.2,13.4 17.2,14.8 H5.9 C5.9,13.4 6.7,12.1 8.3,11.3 Z" fill="#27221c"/><path d="M11.55,14.6 V18.9" stroke="#27221c" stroke-width="1.5" stroke-linecap="round"/></g>
<g transform="translate(2492.7,873.3)"><circle r="11.75" fill="none" stroke="#1f1f1f" stroke-width="2.1"/><circle cx="-5.4" r="1.65" fill="#1f1f1f"/><circle r="1.65" fill="#1f1f1f"/><circle cx="5.4" r="1.65" fill="#1f1f1f"/></g>
<path d="M703.6,939.5 L710.0,945.4 L716.4,939.5" fill="none" stroke="#6e6e6e" stroke-width="3" stroke-linecap="round" stroke-linejoin="round"/>
<g transform="translate(737.3,929.5)"><path d="M1.1,12.4 L14.8,1.3 L28.5,12.4" fill="none" stroke="#27221c" stroke-width="2.2" stroke-linecap="round" stroke-linejoin="round"/><path d="M4.6,10.4 V23 a2.4,2.4 0 0 0 2.4,2.4 H22.5 a2.4,2.4 0 0 0 2.4,-2.4 V10.4" fill="none" stroke="#27221c" stroke-width="2.2"/><rect x="11.6" y="16.4" width="6.7" height="9.4" fill="#27221c"/><path d="M24.9,3.3 V9" stroke="#27221c" stroke-width="2.2" stroke-linecap="round"/></g>
<g transform="translate(2492.7,941.3)"><circle r="11.75" fill="none" stroke="#1f1f1f" stroke-width="2.1"/><circle cx="-5.4" r="1.65" fill="#1f1f1f"/><circle r="1.65" fill="#1f1f1f"/><circle cx="5.4" r="1.65" fill="#1f1f1f"/></g>
<g transform="translate(763.1,998.1)"><circle cx="9.4" cy="6.8" r="4.6" fill="#fdb25b"/><path d="M0,21.2 C0,16.6 4,14 9.4,14 C11.6,14 13.6,14.5 15.2,15.3 C12.8,17 11.6,19.4 11.5,23.2 H1.8 C0.7,23.2 0,22.5 0,21.2 Z" fill="#fdb25b"/><circle cx="23.8" cy="5.6" r="5.5" fill="#fdb25b"/><path d="M13.2,21.4 C13.2,16.4 17.6,13.4 23.9,13.4 C30.2,13.4 34.7,16.4 34.7,21.4 C34.7,22.6 34,23.2 32.9,23.2 H15 C13.9,23.2 13.2,22.6 13.2,21.4 Z" fill="#fdb25b"/></g>
<g transform="translate(2492.7,1009.4)"><circle r="11.75" fill="none" stroke="#1f1f1f" stroke-width="2.1"/><circle cx="-5.4" r="1.65" fill="#1f1f1f"/><circle r="1.65" fill="#1f1f1f"/><circle cx="5.4" r="1.65" fill="#1f1f1f"/></g>
<g transform="translate(763.1,1071)"><path d="M3.2,0 H7.2 a3.3,3.3 0 0 0 6.6,0 H17.8 a3.2,3.2 0 0 1 3.2,3.2 V23.6 a3.2,3.2 0 0 1 -3.2,3.2 H3.2 a3.2,3.2 0 0 1 -3.2,-3.2 V3.2 a3.2,3.2 0 0 1 3.2,-3.2 Z" fill="#fdb25b"/><path d="M5.4,8.4 H15.8 M5.4,12.8 H10.6" stroke="#fff" stroke-width="1.6" stroke-linecap="round"/></g>
<g transform="translate(2492.7,1083.4)"><circle r="11.75" fill="none" stroke="#1f1f1f" stroke-width="2.1"/><circle cx="-5.4" r="1.65" fill="#1f1f1f"/><circle r="1.65" fill="#1f1f1f"/><circle cx="5.4" r="1.65" fill="#1f1f1f"/></g>
<g transform="translate(763.1,1147.8)"><rect x="3.8" y="0" width="17.9" height="14" rx="2.8" fill="#fdb25b"/><path d="M3,6.6 a3,3 0 0 1 3,3 V12.6 H19 V9.6 a3,3 0 0 1 6,0 V17 a2.2,2.2 0 0 1 -2.2,2.2 H2.2 A2.2,2.2 0 0 1 0,17 V9.6 a3,3 0 0 1 3,-3 Z" fill="#fdb25b"/><path d="M5.7,8.2 V12.9 H19.7 V8.2" fill="none" stroke="#fff" stroke-width="1.3" stroke-linecap="round" stroke-linejoin="round"/><rect x="3.2" y="19" width="3.2" height="3.2" rx="0.8" fill="#fdb25b"/><rect x="18.7" y="19" width="3.2" height="3.2" rx="0.8" fill="#fdb25b"/></g>
<g transform="translate(2492.7,1157.4)"><circle r="11.75" fill="none" stroke="#1f1f1f" stroke-width="2.1"/><circle cx="-5.4" r="1.65" fill="#1f1f1f"/><circle r="1.65" fill="#1f1f1f"/><circle cx="5.4" r="1.65" fill="#1f1f1f"/></g>
<path d="M703.6,1229.5 L710.0,1235.4 L716.4,1229.5" fill="none" stroke="#6e6e6e" stroke-width="3" stroke-linecap="round" stroke-linejoin="round"/>
<g transform="translate(736.7,1219.2)"><path d="M12.25,0 a2,2 0 0 1 2,2 v0.7 c3.7,0.9 5.8,4 5.8,7.9 v4.3 c0,1.7 0.9,2.7 2.6,4.2 c0.9,0.8 1.6,1.5 1.6,2.3 c0,1 -0.8,1.7 -2,1.7 H2.25 c-1.2,0 -2,-0.7 -2,-1.7 c0,-0.8 0.7,-1.5 1.6,-2.3 c1.7,-1.5 2.6,-2.5 2.6,-4.2 v-4.3 c0,-3.9 2.1,-7 5.8,-7.9 v-0.7 a2,2 0 0 1 2,-2 z" fill="#27221c"/><path d="M8.3,23.3 H16.2 a4,2.9 0 0 1 -7.9,0 z" fill="#27221c"/></g>
<g transform="translate(2492.7,1231.3)"><circle r="11.75" fill="none" stroke="#1f1f1f" stroke-width="2.1"/><circle cx="-5.4" r="1.65" fill="#1f1f1f"/><circle r="1.65" fill="#1f1f1f"/><circle cx="5.4" r="1.65" fill="#1f1f1f"/></g>
<g transform="translate(763,1286.7)"><path d="M8.5,1 a7.5,7.5 0 0 1 7.5,7.5 c0,3 -1.5,4.7 -2.5,6.7 c-0.7,1.4 -0.9,2.7 -0.9,4.3 v1.3 H4.4 v-1.3 c0,-1.6 -0.2,-2.9 -0.9,-4.3 c-1,-2 -2.5,-3.7 -2.5,-6.7 a7.5,7.5 0 0 1 7.5,-7.5 z" fill="none" stroke="#fdb25b" stroke-width="2" stroke-linejoin="round"/><path d="M4.8,24.5 H12.2 M5.8,27.7 H11.2" stroke="#fdb25b" stroke-width="1.8" stroke-linecap="round"/></g>
<g transform="translate(2492.7,1299.4)"><circle r="11.75" fill="none" stroke="#1f1f1f" stroke-width="2.1"/><circle cx="-5.4" r="1.65" fill="#1f1f1f"/><circle r="1.65" fill="#1f1f1f"/><circle cx="5.4" r="1.65" fill="#1f1f1f"/></g>
<g transform="translate(775,1373.7)"><circle r="11.9" fill="none" stroke="#fdb25b" stroke-width="2"/><circle cx="-6.23" cy="4.36" r="1.05" fill="#fdb25b"/><circle cx="-7.48" cy="-1.32" r="1.05" fill="#fdb25b"/><circle cx="-4.36" cy="-6.23" r="1.05" fill="#fdb25b"/><circle cx="0.00" cy="-7.60" r="1.05" fill="#fdb25b"/><circle cx="7.48" cy="-1.32" r="1.05" fill="#fdb25b"/><circle cx="6.23" cy="4.36" r="1.05" fill="#fdb25b"/><path d="M-2.3,1.2 L5.6,-5.6 L0.9,2.7 A2,2 0 0 1 -2.3,1.2 Z" fill="#fdb25b"/></g>
<g transform="translate(2492.7,1373.4)"><circle r="11.75" fill="none" stroke="#1f1f1f" stroke-width="2.1"/><circle cx="-5.4" r="1.65" fill="#1f1f1f"/><circle r="1.65" fill="#1f1f1f"/><circle cx="5.4" r="1.65" fill="#1f1f1f"/></g>
<g transform="translate(775,1447.8)"><circle r="11.9" fill="none" stroke="#fdb25b" stroke-width="2"/><path d="M0,-6.2 C2.2,-3.2 4.1,-0.8 4.1,1.8 A4.1,4.1 0 0 1 -4.1,1.8 C-4.1,-0.8 -2.2,-3.2 0,-6.2 Z" fill="#fdb25b"/></g>
<g transform="translate(2492.7,1447.4)"><circle r="11.75" fill="none" stroke="#1f1f1f" stroke-width="2.1"/><circle cx="-5.4" r="1.65" fill="#1f1f1f"/><circle r="1.65" fill="#1f1f1f"/><circle cx="5.4" r="1.65" fill="#1f1f1f"/></g>
<g transform="translate(765,1509.2)"><rect x="1" y="1" width="14.2" height="24.6" rx="3.2" fill="#ffecd9" stroke="#fdb25b" stroke-width="2"/><rect x="5.6" y="1.2" width="5" height="2.2" rx="1" fill="#fdb25b"/><path d="M5.4,22.6 H10.8" stroke="#fdb25b" stroke-width="1.2" stroke-linecap="round"/></g>
<g transform="translate(2492.7,1521.4)"><circle r="11.75" fill="none" stroke="#1f1f1f" stroke-width="2.1"/><circle cx="-5.4" r="1.65" fill="#1f1f1f"/><circle r="1.65" fill="#1f1f1f"/><circle cx="5.4" r="1.65" fill="#1f1f1f"/></g>
<g transform="translate(775,1595.8)"><circle r="11.9" fill="none" stroke="#fdb25b" stroke-width="2"/><path d="M2.5,-11.6 C-4,-6 -5.5,3 -1.5,11.6 M3.5,-11.5 C1.5,-4 4,2.5 10.5,5.5 M-11.5,-1.5 C-4,1 5,0 11.4,-3 M-9.8,6.4 C-4,8.5 2,8 6.4,5.8 M-8.3,-8.2 C-3,-5.8 4,-6.2 8.6,-8" fill="none" stroke="#fdb25b" stroke-width="1.5" stroke-linecap="round"/></g>
<g transform="translate(2492.7,1595.4)"><circle r="11.75" fill="none" stroke="#1f1f1f" stroke-width="2.1"/><circle cx="-5.4" r="1.65" fill="#1f1f1f"/><circle r="1.65" fill="#1f1f1f"/><circle cx="5.4" r="1.65" fill="#1f1f1f"/></g>
<g transform="translate(762,1657.2)"><path d="M0.9,4.6 H23.8" stroke="#fdb25b" stroke-width="2.2" stroke-linecap="round"/><path d="M8,4 V2.5 a1.6,1.6 0 0 1 1.6,-1.6 H15.1 a1.6,1.6 0 0 1 1.6,1.6 V4" fill="none" stroke="#fdb25b" stroke-width="1.9"/><path d="M2.6,6.6 H22.1 L21,25 a2.6,2.6 0 0 1 -2.6,2.5 H6.3 A2.6,2.6 0 0 1 3.7,25 Z" fill="#fdb25b"/><path d="M7.9,9.6 L8.3,23.6 M12.35,9.6 V23.6 M16.8,9.6 L16.4,23.6" stroke="#fff" stroke-width="1.6" stroke-linecap="round"/></g>
<g transform="translate(2492.7,1669.4)"><circle r="11.75" fill="none" stroke="#1f1f1f" stroke-width="2.1"/><circle cx="-5.4" r="1.65" fill="#1f1f1f"/><circle r="1.65" fill="#1f1f1f"/><circle cx="5.4" r="1.65" fill="#1f1f1f"/></g>
<g transform="translate(775,1743.8)"><circle r="12.9" fill="#fdb25b"/><g transform="translate(0,-0.3) scale(0.9)"><path d="M0,-8.2 C2.6,-8.2 4.4,-6.8 5,-4.9 C7.2,-4.6 8.6,-2.9 8.6,-0.8 C8.6,1.8 6.6,3.4 4,3.4 H2.2 L1.3,2.2 V8.8 H-1.3 V2.2 L-2.2,3.4 H-4 C-6.6,3.4 -8.6,1.8 -8.6,-0.8 C-8.6,-2.9 -7.2,-4.6 -5,-4.9 C-4.4,-6.8 -2.6,-8.2 0,-8.2 Z" fill="#fff"/></g></g>
<g transform="translate(2492.7,1743.4)"><circle r="11.75" fill="none" stroke="#1f1f1f" stroke-width="2.1"/><circle cx="-5.4" r="1.65" fill="#1f1f1f"/><circle r="1.65" fill="#1f1f1f"/><circle cx="5.4" r="1.65" fill="#1f1f1f"/></g>
<g transform="translate(762.9,1804.8)"><path d="M8.6,0.8 L11.4,3.6 M20.4,0.8 L17.6,3.6" stroke="#fdb25b" stroke-width="1.7" stroke-linecap="round"/><path d="M7.9,8.2 C7.9,4.8 10.6,2.8 14.5,2.8 C18.4,2.8 21.1,4.8 21.1,8.2 C19.2,9.1 16.9,9.5 14.5,9.5 C12.1,9.5 9.8,9.1 7.9,8.2 Z" fill="#fdb25b"/><path d="M13.6,11.4 V30 C7.8,29.6 3.2,25.4 3.2,19 C3.2,15.2 4.4,12.4 6.1,10.2 C8.4,11 11,11.4 13.6,11.4 Z M15.4,11.4 C18,11.4 20.6,11 22.9,10.2 C24.6,12.4 25.8,15.2 25.8,19 C25.8,25.4 21.2,29.6 15.4,30 Z" fill="#fdb25b"/><path d="M5,12.4 L2.2,9.6 M24,12.4 L26.8,9.6 M3.4,18.6 H0.8 M25.6,18.6 H28.2 M5,25 L2.4,27.6 M24,25 L26.6,27.6" stroke="#fdb25b" stroke-width="1.7" stroke-linecap="round"/><circle cx="9.4" cy="15.6" r="1.5" fill="#fff"/><circle cx="19.6" cy="15.6" r="1.5" fill="#fff"/><circle cx="8.2" cy="20.8" r="1.5" fill="#fff"/><circle cx="20.8" cy="20.8" r="1.5" fill="#fff"/><circle cx="10" cy="25.6" r="1.2" fill="#fff"/><circle cx="19" cy="25.6" r="1.2" fill="#fff"/></g>
<g transform="translate(2492.7,1817.4)"><circle r="11.75" fill="none" stroke="#1f1f1f" stroke-width="2.1"/><circle cx="-5.4" r="1.65" fill="#1f1f1f"/><circle r="1.65" fill="#1f1f1f"/><circle cx="5.4" r="1.65" fill="#1f1f1f"/></g>
<path d="M703.6,1890.25 L710.0,1896.15 L716.4,1890.25" fill="none" stroke="#6e6e6e" stroke-width="3" stroke-linecap="round" stroke-linejoin="round"/>
<g transform="translate(736.9,1878.6)"><path d="M12.65,0 V3" stroke="#27221c" stroke-width="1.9" stroke-linecap="round"/><path d="M0,14.6 C0,7.2 5.4,1.9 12.65,1.9 C19.9,1.9 25.3,7.2 25.3,14.6 C25.3,15.6 24.4,15.8 23.9,15 C23.1,13.7 21.9,13 20.6,13 C19,13 17.7,13.9 17,15.2 C16.7,15.8 16,15.8 15.7,15.2 C15.1,13.9 14,13 12.65,13 C11.3,13 10.2,13.9 9.6,15.2 C9.3,15.8 8.6,15.8 8.3,15.2 C7.6,13.9 6.3,13 4.7,13 C3.4,13 2.2,13.7 1.4,15 C0.9,15.8 0,15.6 0,14.6 Z" fill="#27221c"/><path d="M12.65,12 V25.2 a3.1,3.1 0 0 1 -6.2,0" fill="none" stroke="#27221c" stroke-width="1.9" stroke-linecap="round"/></g>
<g transform="translate(2492.7,1892.05)"><circle r="11.75" fill="none" stroke="#1f1f1f" stroke-width="2.1"/><circle cx="-5.4" r="1.65" fill="#1f1f1f"/><circle r="1.65" fill="#1f1f1f"/><circle cx="5.4" r="1.65" fill="#1f1f1f"/></g>
</svg>
</div></body></html>
